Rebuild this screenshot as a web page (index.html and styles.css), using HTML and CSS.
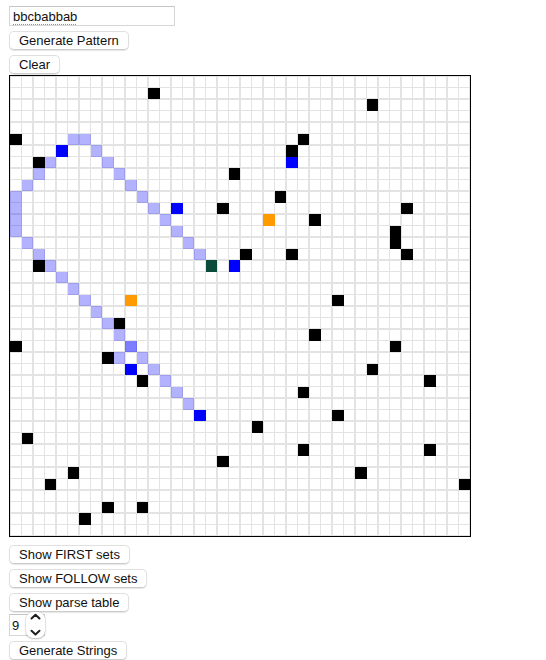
FILE: index.html
```html
<!DOCTYPE html>
<html lang="en">
<head>
<meta charset="utf-8">
<title>Pattern Grid</title>
<link rel="stylesheet" href="styles.css">
</head>
<body>
<div class="page">
  <div class="field"><span class="typo">bbcbabbab</span></div>
  <button class="btn">Generate Pattern</button>
  <button class="btn btn-clear">Clear</button>
  <div class="board">
    <i class="k" style="grid-area:2/13"></i>
    <i class="k" style="grid-area:3/32"></i>
    <i class="k" style="grid-area:6/1"></i>
    <i class="k" style="grid-area:6/26"></i>
    <i class="k" style="grid-area:7/25"></i>
    <i class="k" style="grid-area:8/3"></i>
    <i class="k" style="grid-area:9/20"></i>
    <i class="k" style="grid-area:11/24"></i>
    <i class="k" style="grid-area:12/19"></i>
    <i class="k" style="grid-area:12/35"></i>
    <i class="k" style="grid-area:13/27"></i>
    <i class="k" style="grid-area:14/34"></i>
    <i class="k" style="grid-area:15/34"></i>
    <i class="k" style="grid-area:16/21"></i>
    <i class="k" style="grid-area:16/25"></i>
    <i class="k" style="grid-area:16/35"></i>
    <i class="k" style="grid-area:17/3"></i>
    <i class="k" style="grid-area:20/29"></i>
    <i class="k" style="grid-area:22/10"></i>
    <i class="k" style="grid-area:23/27"></i>
    <i class="k" style="grid-area:24/1"></i>
    <i class="k" style="grid-area:24/34"></i>
    <i class="k" style="grid-area:25/9"></i>
    <i class="k" style="grid-area:26/32"></i>
    <i class="k" style="grid-area:27/12"></i>
    <i class="k" style="grid-area:27/37"></i>
    <i class="k" style="grid-area:28/26"></i>
    <i class="k" style="grid-area:30/29"></i>
    <i class="k" style="grid-area:31/22"></i>
    <i class="k" style="grid-area:32/2"></i>
    <i class="k" style="grid-area:33/26"></i>
    <i class="k" style="grid-area:33/37"></i>
    <i class="k" style="grid-area:34/19"></i>
    <i class="k" style="grid-area:35/6"></i>
    <i class="k" style="grid-area:35/31"></i>
    <i class="k" style="grid-area:36/4"></i>
    <i class="k" style="grid-area:36/40"></i>
    <i class="k" style="grid-area:38/9"></i>
    <i class="k" style="grid-area:38/12"></i>
    <i class="k" style="grid-area:39/7"></i>

    <i class="b" style="grid-area:7/5"></i>
    <i class="b" style="grid-area:8/25"></i>
    <i class="b" style="grid-area:12/15"></i>
    <i class="b" style="grid-area:17/20"></i>
    <i class="b" style="grid-area:26/11"></i>
    <i class="b" style="grid-area:30/17"></i>

    <i class="o" style="grid-area:13/23"></i>
    <i class="o" style="grid-area:20/11"></i>
    <i class="g" style="grid-area:17/18"></i>

    <i class="p" style="grid-area:6/6"></i>
    <i class="p" style="grid-area:6/7"></i>
    <i class="p" style="grid-area:7/8"></i>
    <i class="p" style="grid-area:8/4"></i>
    <i class="p" style="grid-area:8/9"></i>
    <i class="p" style="grid-area:9/3"></i>
    <i class="p" style="grid-area:9/10"></i>
    <i class="p" style="grid-area:10/2"></i>
    <i class="p" style="grid-area:10/11"></i>
    <i class="p" style="grid-area:11/1"></i>
    <i class="p" style="grid-area:11/12"></i>
    <i class="p" style="grid-area:12/1"></i>
    <i class="p" style="grid-area:12/13"></i>
    <i class="p" style="grid-area:13/1"></i>
    <i class="p" style="grid-area:13/14"></i>
    <i class="p" style="grid-area:14/1"></i>
    <i class="p" style="grid-area:14/15"></i>
    <i class="p" style="grid-area:15/2"></i>
    <i class="p" style="grid-area:15/16"></i>
    <i class="p" style="grid-area:16/3"></i>
    <i class="p" style="grid-area:16/17"></i>
    <i class="p" style="grid-area:17/4"></i>
    <i class="p" style="grid-area:18/5"></i>
    <i class="p" style="grid-area:19/6"></i>
    <i class="p" style="grid-area:20/7"></i>
    <i class="p" style="grid-area:21/8"></i>
    <i class="p" style="grid-area:22/9"></i>
    <i class="p" style="grid-area:23/10"></i>
    <i class="p2" style="grid-area:24/11"></i>
    <i class="p" style="grid-area:25/10"></i>
    <i class="p" style="grid-area:25/12"></i>
    <i class="p" style="grid-area:26/13"></i>
    <i class="p" style="grid-area:27/14"></i>
    <i class="p" style="grid-area:28/15"></i>
    <i class="p" style="grid-area:29/16"></i>
  </div>
  <button class="btn">Show FIRST sets</button>
  <button class="btn">Show FOLLOW sets</button>
  <button class="btn btn-parse">Show parse table</button>
  <div class="num">
    <span class="num-val">9</span>
    <span class="stepper">
      <svg width="19" height="26" viewBox="0 0 19 26" aria-hidden="true">
        <polyline points="5.5,6.5 9.5,2.8 13.5,6.5" fill="none" stroke="#1e1e1e" stroke-width="2" stroke-linecap="round" stroke-linejoin="round"/>
        <polyline points="5.5,18.8 9.5,22.5 13.5,18.8" fill="none" stroke="#1e1e1e" stroke-width="2" stroke-linecap="round" stroke-linejoin="round"/>
      </svg>
    </span>
  </div>
  <button class="btn">Generate Strings</button>
</div>
</body>
</html>
```

FILE: styles.css
```css
html, body {
  margin: 0;
  background: #ffffff;
}

body {
  font-family: "Liberation Sans", Arial, sans-serif;
  font-size: 13px;
  color: #000;
}

.page {
  display: flex;
  flex-direction: column;
  align-items: flex-start;
  padding: 6px 0 0 9px;
}

.field {
  box-sizing: border-box;
  width: 166px;
  height: 20px;
  border: 1px solid #d6d6d6;
  border-top-color: #c4c4c4;
  padding: 0 3px;
  display: flex;
  align-items: center;
  margin-bottom: 5px;
  color: #111;
}

.typo {
  text-decoration: underline dotted #e86a62;
  text-decoration-thickness: 1px;
  text-underline-offset: 3px;
}

.btn {
  box-sizing: border-box;
  height: 19px;
  padding: 0 9px;
  margin: 0 0 5px;
  font: 13px "Liberation Sans", Arial, sans-serif;
  line-height: 17px;
  color: #111;
  background: #ffffff;
  border: 1px solid #e0e0e0;
  border-bottom-color: #cccccc;
  border-radius: 5px;
  box-shadow: 0 1px 1px rgba(0, 0, 0, 0.1);
}

.btn-clear {
  margin-bottom: 1px;
}

.btn-parse {
  margin-bottom: 2px;
}

.board {
  width: 460px;
  height: 460px;
  border: 1px solid #000;
  margin-bottom: 8px;
  display: grid;
  grid-template-columns: repeat(40, 11.5px);
  grid-template-rows: repeat(40, 11.5px);
  background-color: #fff;
  background-image:
    repeating-linear-gradient(to right, #e3e3e3 0 0.8px, transparent 0.8px 10.7px, #e3e3e3 10.7px 11.5px),
    repeating-linear-gradient(to bottom, #e3e3e3 0 0.8px, transparent 0.8px 10.7px, #e3e3e3 10.7px 11.5px);
}

.board i {
  display: block;
}

.board .k { background: #000000; }
.board .b { background: #0000ff; }
.board .o { background: #ff9a00; }
.board .g { background: #0a4b3b; }
.board .p { background: rgba(0, 0, 255, 0.3); }
.board .p2 { background: rgba(0, 0, 255, 0.51); }

.num {
  position: relative;
  box-sizing: border-box;
  width: 36px;
  height: 22px;
  border: 1px solid #d6d6d6;
  border-top-color: #c4c4c4;
  padding-left: 2px;
  display: flex;
  align-items: center;
  margin-bottom: 5px;
  color: #111;
}

.stepper {
  position: absolute;
  right: -1px;
  top: -3px;
  width: 19px;
  height: 26px;
  background: #fff;
  border-radius: 7px;
  box-shadow: 0 0 0 0.5px rgba(0, 0, 0, 0.12), 0 1px 2px rgba(0, 0, 0, 0.22);
}

.stepper svg {
  display: block;
}
```
